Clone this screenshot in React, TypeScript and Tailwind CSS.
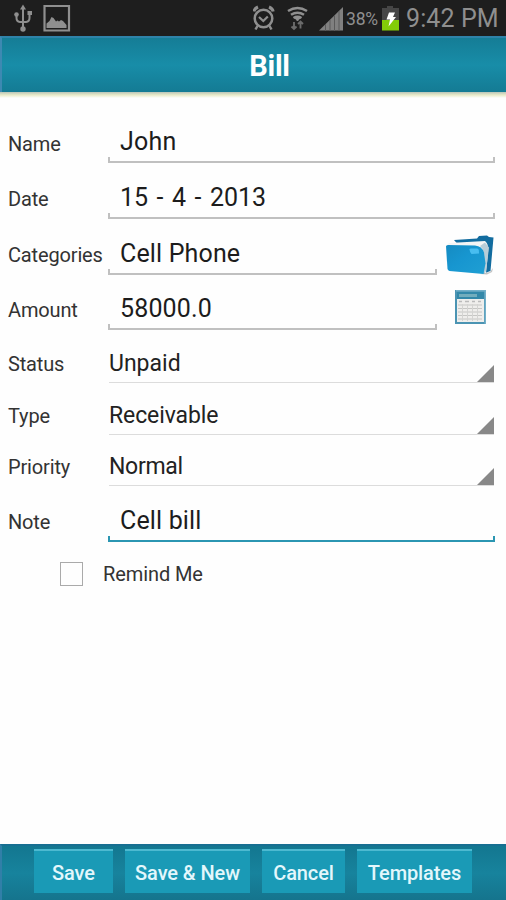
import type { ReactNode } from 'react';

function StatusBar() {
  return (
    <div className="flex h-9 items-center bg-[#1e1e1e] text-[#8f8f8f]">
      <svg width="253" height="36" viewBox="0 0 253 36" fill="none" stroke="currentColor" strokeWidth="1.7">
        <path d="M23 8v21M16.500 14v4q0 3.500 3.500 4h6q3.500-.5 3.500-4v-5" strokeWidth="2" />
        <path d="M23 4.500l3 5h-6z" fill="currentColor" stroke="none" />
        <circle cx="23" cy="29" r="2.700" fill="currentColor" stroke="none" />
        <circle cx="16.500" cy="14.500" r="2.300" fill="currentColor" stroke="none" />
        <path d="M27.500 11H32v4h-4.500z" fill="currentColor" stroke="none" />
        <path d="M44.500 6H69v24.500H44.500z" strokeWidth="2.200" />
        <path d="M46.500 28v-4.500l3-2.500 2-4 2 1 2.500 3.500 1.500-1 1.500 1 2-1.500 2 1 3.500 4v3z" fill="currentColor" stroke="none" />
      </svg>
      <svg width="93" height="36" viewBox="253 0 93 36" fill="none" stroke="currentColor">
        <circle cx="263.500" cy="18.500" r="8.800" strokeWidth="2.500" />
        <path d="M259 17l4.300 4 4.500-4.500" strokeWidth="2.200" />
        <path d="M253.800 11.500q.7-3 4.200-4.500M273.200 11.500q-.7-3-4.200-4.500" strokeWidth="3" />
        <path d="M257.500 26l-2 3.500M269.500 26l2 3.500" strokeWidth="2.500" />
        <path d="M288 11q9.500-6 19 0M291 14.800q6.500-4.300 13 0M293.500 18q4-2.500 8 0" strokeWidth="2.500" />
        <path d="M295 18h5l-2.500 3z" fill="currentColor" />
        <path d="M294 22v7M291.500 26.500l2.500 2.500 2.500-2.500M300.500 28.500v-7M298 24l2.500-2.500 2.500 2.500" stroke="#6b6b6b" strokeWidth="1.900" />
        <path d="M319 30.500L343 7v23.500z" fill="#808080" stroke="none" />
        <path d="M325.500 24v7M330 20v11M334.500 15v16M339 11v20" stroke="#5a5a5a" strokeWidth="1" />
      </svg>
      <span className="w-9 pt-px text-[17.500px] leading-[36px] tracking-[-0.2px] whitespace-nowrap">38%</span>
      <svg width="18" height="36" viewBox="0 0 18 36">
        <path d="M5 6h6v2h6v13H0V8h5z" fill="#464646" />
        <path d="M0 20h17v10.500H0z" fill="#83cc08" />
        <path d="M7 12.500h6l-2 4.500h3l-7.500 9.500L8 19.500H4.500z" fill="#fff" />
      </svg>
      <span className="ml-[6px] pt-px text-[25px] tracking-[0.1px] whitespace-nowrap">9:42 PM</span>
    </div>
  );
}

function FolderIcon() {
  return (
    <svg width="50" height="42" viewBox="445 234 50 42">
      <defs>
        <linearGradient id="folderFront" x1="0" y1="0" x2="1" y2="1">
          <stop stopColor="#158bc2" />
          <stop offset=".45" stopColor="#1796d0" />
          <stop offset="1" stopColor="#1f9fd3" />
        </linearGradient>
      </defs>
      <path d="M480 274l10-2 3-4-1 4-5 2.500z" fill="#aaa" opacity=".7" />
      <path d="M454 240l23-1.500 2-2.500 8-.500 2 1.500 4.500.500-3 33.500-7 2.500z" fill="#126c9f" />
      <path d="M449 243l36-2q4 3 3 12l-2 20-5-1-8-25-26-2z" fill="#f4f5f5" />
      <path d="M480 246q5 4 4 13l-1 14 3-1.500 3-24-4-5z" fill="#b8cdd8" />
      <path d="M446 246.500q0-1.500 2-1.500l27 .5q7 .5 9 7l1.500 11-2 10.500-34-3q-1.500-.3-2-2z" fill="url(#folderFront)" />
      <path d="M469.500 249.500q0-1 1.500-1h6q1.500 0 1.800 1.500l.2 3.500-7.500.5q-1.700-1.500-2-4.500z" fill="#48bdf0" />
    </svg>
  );
}

function CalculatorIcon() {
  return (
    <svg width="34" height="36" viewBox="0 0 34 36">
      <path d="M1 1h31v34H1z" fill="#4b94b3" />
      <path d="M2 1h29v1.500H2zM30.500 1H32v34h-1.500z" fill="#74b0c9" />
      <path d="M3 3h27v7H3z" fill="#3388a9" />
      <path d="M5 5h18v3H5z" fill="#72adbd" />
      <path d="M3 10h27v23H3z" fill="#efeeec" />
      <path d="M4 16h24M4 19.500h24M4 23h24M4 26.500h24M4 30h24" stroke="#c6c6c4" strokeWidth="1" />
      <path d="M8.500 15v17M13.500 15v17M18.500 15v17M23.500 15v17" stroke="#d4d4d2" strokeWidth="1" />
      <path d="M5 12.500h3M11 12.500h4M18 12.500h3M24 12.500h3" stroke="#bbb" strokeWidth="1.500" />
    </svg>
  );
}

function Row({ label, height, labelPad = 'pb-[7px]', children }: { label: string; height: string; labelPad?: string; children: ReactNode }) {
  return (
    <div className={`flex items-end pl-2 ${height}`}>
      <div className={`w-[100px] shrink-0 text-[20px] leading-6 tracking-[-0.15px] text-[#333] whitespace-nowrap ${labelPad}`}>{label}</div>
      {children}
    </div>
  );
}

function Field({ value, width = 'w-[386.500px]', tone = 'bg-[#c0c0c0]', spacing = '' }: { value: string; width?: string; tone?: string; spacing?: string }) {
  return (
    <div className={width}>
      <div className={`pl-3 text-[25px] leading-[30px] text-[#1c1c1c] whitespace-nowrap ${spacing}`}>{value}</div>
      <div className="flex h-1 justify-between">
        <div className={`w-[1.5px] ${tone}`} />
        <div className={`w-[1.5px] ${tone}`} />
      </div>
      <div className={`h-[2px] ${tone}`} />
    </div>
  );
}

function Spinner({ value, spacing = '' }: { value: string; spacing?: string }) {
  return (
    <div className="ml-px flex w-[385px] items-end justify-between border-b-[1.500px] border-[#dcdcdc]">
      <span className={`pb-1 text-[23px] leading-[28px] text-[#222] whitespace-nowrap ${spacing}`}>{value}</span>
      <svg width="17" height="17" viewBox="0 0 17 17">
        <path d="M0 17L17 0v17z" fill="#888" />
      </svg>
    </div>
  );
}

function ActionButton({ label, width }: { label: string; width: string }) {
  return (
    <button className={`h-11 border-t-2 border-[#4db9d0] bg-[#1a9ab6] pt-[3px] text-[20px] leading-[39px] font-medium tracking-[-0.1px] text-[#e3f7fc] whitespace-nowrap ${width}`}>
      {label}
    </button>
  );
}

export default function App() {
  return (
    <div className="flex h-[900px] w-[506px] flex-col overflow-hidden bg-[#fefefe] font-['Roboto',sans-serif]">
      <StatusBar />
      <header className="flex h-14 shrink-0 items-center justify-center border-t-2 border-l-2 border-t-[#2f83a9] border-l-[#3d89b2] bg-linear-to-b from-[#157d96] via-[#188da8] to-[#147b94] pl-[31px] text-[29px] font-bold tracking-[-0.3px] text-white">
        <span className="pt-[3px]">Bill</span>
      </header>
      <div className="h-[6px] shrink-0 bg-linear-to-b from-[#b9c4b9] via-[#e9ebc8] to-[#fefefe]" />
      <main className="flex-1">
        <Row label="Name" height="h-[65px]"><Field value="John" spacing="tracking-[0.2px]" /></Row>
        <Row label="Date" height="h-14" labelPad="pb-2"><Field value="15 - 4 - 2013" spacing="[word-spacing:2.300px]" /></Row>
        <Row label="Categories" height="h-14" labelPad="pb-2">
          <Field value="Cell Phone" width="w-[328.500px]" spacing="tracking-[0.15px]" />
          <div className="-mb-px ml-2 h-[42px]"><FolderIcon /></div>
        </Row>
        <Row label="Amount" height="h-[55px]" labelPad="pb-2">
          <Field value="58000.0" width="w-[328.500px]" spacing="tracking-[0.15px]" />
          <div className="mb-[5px] ml-[17px]"><CalculatorIcon /></div>
        </Row>
        <Row label="Status" height="h-[53px]"><Spinner value="Unpaid" /></Row>
        <Row label="Type" height="h-[52px]"><Spinner value="Receivable" spacing="tracking-[-0.1px]" /></Row>
        <Row label="Priority" height="h-[51px]"><Spinner value="Normal" spacing="tracking-[-0.3px]" /></Row>
        <Row label="Note" height="h-14" labelPad="pb-2"><Field value="Cell bill" tone="bg-[#2b96b2]" spacing="tracking-[0.15px]" /></Row>
        <label className="mt-5 flex h-6 items-center pl-[60px] text-[20px] tracking-[-0.1px] text-[#333]">
          <span className="mr-5 h-6 w-[23px] border-[1.500px] border-[#aaa] bg-[#fefefe]" />
          Remind Me
        </label>
      </main>
      <footer className="flex h-14 shrink-0 items-start gap-3 border-t-2 border-l-2 border-t-[#176f92] border-l-[#317fa8] bg-linear-to-b from-[#137790] via-[#17839d] to-[#15748d] pt-[3px] pl-8">
        <ActionButton label="Save" width="w-[79px]" />
        <ActionButton label="Save & New" width="w-[125px]" />
        <ActionButton label="Cancel" width="w-[83px]" />
        <ActionButton label="Templates" width="w-[115px]" />
      </footer>
    </div>
  );
}
